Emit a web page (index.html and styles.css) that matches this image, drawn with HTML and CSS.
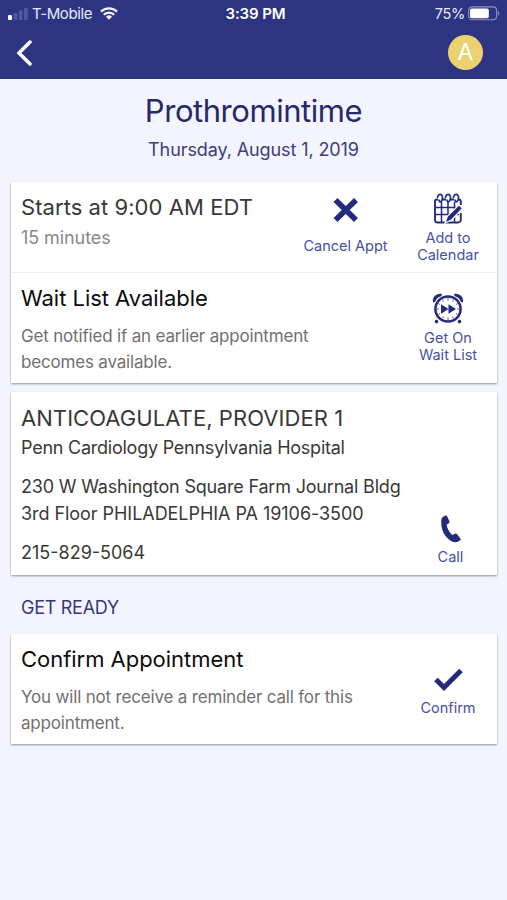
FILE: index.html
```html
<!DOCTYPE html>
<html lang="en">
<head>
    <meta charset="UTF-8">
    <meta name="viewport" content="width=device-width, initial-scale=1.0">
    <title>Appointment Details</title>
    <link rel="stylesheet" href="styles.css">
</head>
<body>
    <header>
        <div class="status-bar">
            <div class="carrier">
                <svg width="20" height="13" viewBox="0 0 20 13">
                    <rect x="0" y="8" width="4" height="5" rx="1" fill="#fff"/>
                    <rect x="5.5" y="6" width="3.8" height="7" rx="1" fill="#5057a0"/>
                    <rect x="10.8" y="3.5" width="3.8" height="9.5" rx="1" fill="#5057a0"/>
                    <rect x="16" y="1" width="3.8" height="12" rx="1" fill="#5057a0"/>
                </svg>
                <span>T-Mobile</span>
                <svg width="18" height="13" viewBox="0 0 18 13" fill="none" stroke="#f4f4ff" stroke-width="2.2">
                    <path d="M1 4.6a11.3 11.3 0 0 1 16 0"/>
                    <path d="M3.8 7.8a7.3 7.3 0 0 1 10.4 0"/>
                    <path d="M9 12.8L6 9.8a4.3 4.3 0 0 1 6 0z" fill="#f4f4ff" stroke="none"/>
                </svg>
            </div>
            <span class="time">3:39 PM</span>
            <div class="battery">
                <span>75%</span>
                <svg width="32" height="15" viewBox="0 0 32 15">
                    <rect x="0.6" y="0.9" width="28" height="12.8" rx="3.5" fill="none" stroke="#8b90c4" stroke-width="1.1"/>
                    <rect x="2" y="2.4" width="18.8" height="9.8" rx="1.8" fill="#fff"/>
                    <path d="M29.8 5v4.6c2-.6 2-4 0-4.6z" fill="#8b90c4"/>
                </svg>
            </div>
        </div>
        <nav>
            <a href="#" class="back">
                <svg width="16" height="26" viewBox="0 0 16 26" fill="none" stroke="#fff" stroke-width="3.5" stroke-linecap="round">
                    <path d="M14 2L3 13l11 11"/>
                </svg>
            </a>
            <span class="avatar">A</span>
        </nav>
    </header>

    <h1>Prothromintime</h1>
    <p class="date">Thursday, August 1, 2019</p>

    <section class="card">
        <div class="row start">
            <div class="info">
                <h2 class="starts">Starts at 9:00 AM EDT</h2>
                <p class="duration">15 minutes</p>
            </div>
            <a href="#" class="action cancel">
                <svg width="26" height="26" viewBox="0 0 26 26" fill="none" stroke="#252b7b" stroke-width="5.6">
                    <path d="M2.5 3L23 23M23 3L2.5 23"/>
                </svg>
                <span>Cancel Appt</span>
            </a>
            <a href="#" class="action calendar">
                <svg width="30" height="31" viewBox="0 0 30 31" fill="none" stroke="#252b7b">
                    <path d="M27.8 12V8.500a2 2 0 0 0-2-2H4a2 2 0 0 0-2 2V27a2.500 2.500 0 0 0 2.500 2.500H25a2.800 2.800 0 0 0 2.800-2.800V20" stroke-width="1.900"/>
                    <path d="M2 14.500h24M2 21.500h24M8.500 9v20M15 9v20M21.500 9v20" stroke-width="1.500"/>
                    <!-- binder rings -->
                    <g stroke="#fff" stroke-width="4">
                        <path d="M7 5v3M15 5v3M23 5v3"/>
                    </g>
                    <path d="M4.500 5c0-5 5.500-4.500 5 0S6 10 6 6.500M12.500 5c0-5 5.500-4.500 5 0S14 10 14 6.500M20.500 5c0-5 5.500-4.500 5 0S22 10 22 6.500" stroke-width="1.700"/>
                    <!-- pencil -->
                    <path d="M12 30l2.500-7L26 11.800l3.500 3.500L18.500 27z" fill="#252b7b" stroke="#fff" stroke-width="1.200"/>
                </svg>
                <span>Add to<br>Calendar</span>
            </a>
        </div>
        <div class="row wait">
            <div class="info">
                <h2 class="dark">Wait List Available</h2>
                <p class="detail">Get notified if an earlier appointment<br>becomes available.</p>
            </div>
            <a href="#" class="action clock">
                <svg width="32" height="31" viewBox="0 0 32 31" fill="none" stroke="#252b7b">
                    <circle cx="16" cy="16" r="12.6" stroke-width="2.5"/>
                    <path d="M16 5v2.5M16 24.5V27M5 16h2M25 16h2M10.5 6.5l1 2M21.5 6.5l-1 2M10.5 25.5l1-2M21.5 25.5l-1-2M6.5 10.5l1.5 1M25.5 10.5l-1.5 1M6.5 21.5l1.500-1M25.5 21.5l-1.500-1" stroke-width="0.8"/>
                    <path d="M9 11.200l7.500 4.800L9 20.800zM16.500 11.200L24 16l-7.500 4.800z" fill="#252b7b" stroke="none"/>
                    <path d="M1 9.500C0 4 4.500 0 10 1L9.500 3C6 4 4 6 3 9z" fill="#252b7b" stroke="none"/>
                    <path d="M31 9.500C32 4 27.500 0 22 1l.5 2c3.500 1 5.500 3 6.500 6z" fill="#252b7b" stroke="none"/>
                    <g fill="#252b7b" stroke="none">
                        <circle cx="4.500" cy="28.600" r="1.800"/>
                        <circle cx="27.500" cy="28.600" r="1.800"/>
                    </g>
                </svg>
                <span>Get On<br>Wait List</span>
            </a>
        </div>
    </section>

    <section class="card">
        <div class="row provider">
            <div class="info">
                <h2 class="name">ANTICOAGULATE, PROVIDER 1</h2>
                <p class="department">Penn Cardiology Pennsylvania Hospital</p>
                <p class="address">230 W Washington Square Farm Journal Bldg<br><span class="city">3rd Floor PHILADELPHIA PA 19106-3500</span></p>
                <p class="phone">215-829-5064</p>
            </div>
            <a href="#" class="action call">
                <svg width="20" height="28" viewBox="0 0 20 28" fill="#252b7b">
                    <path d="M1.5 2.2L4.2.6c.8-.4 1.5-.2 1.9.6l2.3 5c.3.8.1 1.5-.6 2L5.600 9.700c.7 4 2.700 7.500 5.700 10.200l2.600-1.200c.8-.4 1.500-.2 2 .4l3.500 4.300c.5.7.4 1.400-.2 1.900-2.200 2-5.300 2.500-8.200 1.100C4.500 23.200.6 16.500.3 8.600.2 5.500.3 3.200 1.500 2.200z"/>
                </svg>
                <span>Call</span>
            </a>
        </div>
    </section>

    <h3>GET READY</h3>

    <section class="card">
        <div class="row ready">
            <div class="info">
                <h2 class="dark">Confirm Appointment</h2>
                <p class="detail">You will not receive a reminder call for this<br>appointment.</p>
            </div>
            <a href="#" class="action confirm">
                <svg width="30" height="24" viewBox="0 0 30 24" fill="none" stroke="#252b7b" stroke-width="5">
                    <path d="M3 11.5l8 8L28 2.5"/>
                </svg>
                <span>Confirm</span>
            </a>
        </div>
    </section>
</body>
</html>
```

FILE: styles.css
```css
* {
    box-sizing: border-box;
}
body {
    margin: 0;
    min-height: 900px;
    background-color: #f3f4fe;
    color: #383838;
    font-family: Inter, "Liberation Sans", sans-serif;
    font-size: 18px;
}
h1, h2, h3, p {
    margin: 0;
    font-weight: 400;
    white-space: nowrap;
}
svg {
    display: block;
    flex: none;
}
header {
    height: 79px;
    background-color: #2d3583;
    color: #e8eaff;
}
.status-bar {
    display: grid;
    grid-template-columns: 1fr auto 1fr;
    align-items: center;
    height: 27px;
    padding: 0 7px 0 8px;
    font-size: 15px;
}
.carrier, .battery {
    display: flex;
    align-items: center;
}
.carrier span {
    margin: 0 8px 0 4px;
    letter-spacing: -0.4px;
}
.time {
    padding-left: 3px;
    color: #fff;
    font-weight: 600;
    letter-spacing: -0.1px;
}
.battery {
    justify-content: flex-end;
    gap: 3px;
    font-size: 14.5px;
    letter-spacing: -0.3px;
}
nav {
    display: flex;
    align-items: center;
    justify-content: space-between;
    height: 51px;
    padding: 0 24px 0 16px;
}
.avatar {
    width: 35px;
    height: 35px;
    border-radius: 50%;
    background-color: #ecd171;
    color: #fff;
    font-size: 23px;
    line-height: 35px;
    text-align: center;
}
h1 {
    margin-top: 12px;
    color: #26286a;
    font-size: 31px;
    line-height: 40px;
    letter-spacing: -0.45px;
    text-align: center;
}
.date {
    margin: 6px 0 19px;
    color: #3c3d7c;
    line-height: 26px;
    letter-spacing: -0.1px;
    text-align: center;
}
.card {
    width: 486px;
    margin-left: 11px;
    background-color: #fff;
    box-shadow: 0 1px 2px rgba(0, 0, 0, 0.4);
}
.card + .card {
    margin-top: 9px;
}
.row {
    display: flex;
    padding: 10px 0 0 10px;
}
.info {
    flex: 1;
    width: 0;
}
.start {
    height: 91px;
    border-bottom: 1px solid #eeeef3;
}
.wait {
    height: 110px;
}
.provider {
    height: 183px;
    padding-top: 11px;
}
.ready {
    height: 110px;
}
h2 {
    font-size: 22px;
    line-height: 30px;
}
.starts, .name {
    letter-spacing: 0.06px;
}
.dark {
    color: #0c0c0c;
    letter-spacing: -0.03px;
}
.duration {
    margin-top: 3px;
    color: #888;
    line-height: 26px;
    letter-spacing: -0.08px;
}
.detail {
    margin-top: 11px;
    color: #707070;
    font-size: 17px;
    line-height: 25.5px;
    letter-spacing: -0.18px;
}
.department {
    margin-top: 2px;
    line-height: 26px;
    letter-spacing: -0.24px;
}
.address {
    margin-top: 13px;
    line-height: 26.7px;
    letter-spacing: -0.19px;
}
.city {
    letter-spacing: -0.05px;
}
.phone {
    margin-top: 13px;
    line-height: 26.7px;
}
h3 {
    margin: 20px 0 13px 21px;
    color: #37387c;
    font-size: 18px;
    line-height: 26px;
    letter-spacing: -0.28px;
}
.action {
    display: flex;
    flex-direction: column;
    align-items: center;
    width: 98px;
    color: #4750a5;
    font-size: 14.5px;
    line-height: 16.7px;
    text-align: center;
    text-decoration: none;
    white-space: nowrap;
}
.cancel {
    width: 107px;
    padding-top: 5px;
    gap: 15px;
}
.calendar {
    padding-top: 1px;
    gap: 6px;
}
.clock {
    padding-top: 10px;
    gap: 6px;
}
.call {
    padding: 112px 0 0 5px;
    gap: 6px;
}
.confirm {
    padding-top: 24px;
    gap: 8px;
}
```
